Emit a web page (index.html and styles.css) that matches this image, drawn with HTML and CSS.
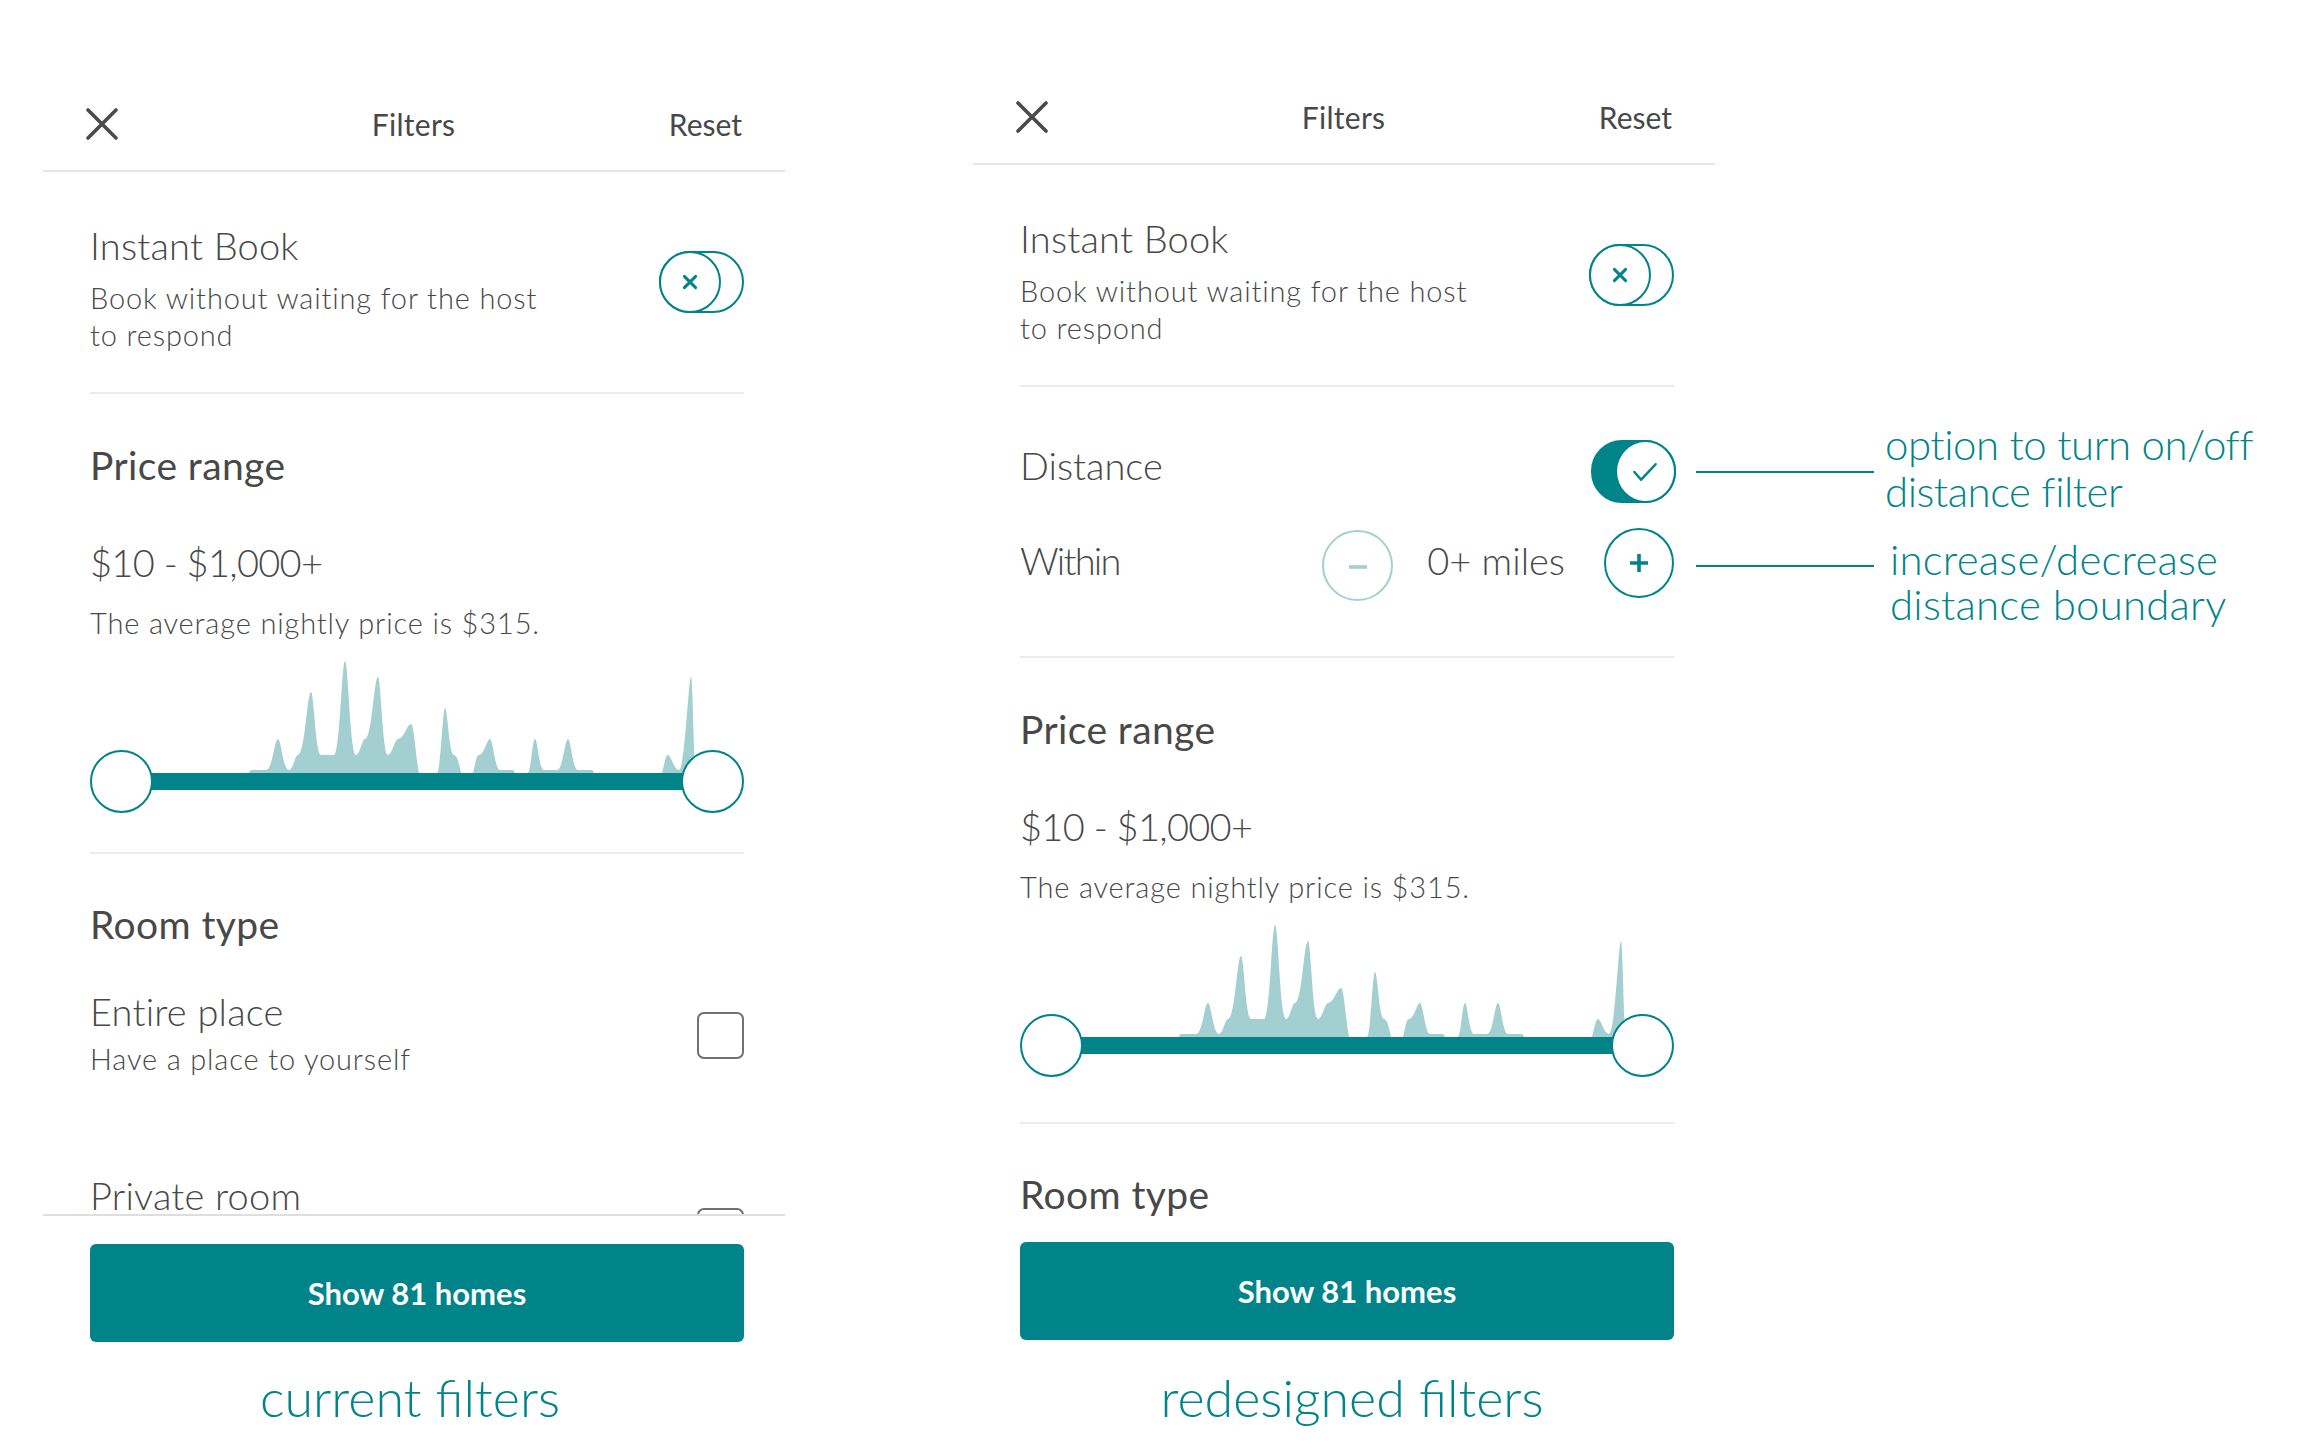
FILE: index.html
```html
<!DOCTYPE html>
<html lang="en">
<head>
<meta charset="utf-8">
<title>Filters – current vs redesigned</title>
<link rel="stylesheet" href="styles.css">
</head>
<body>
<div class="page">

  <!-- CURRENT FILTERS -->
  <section class="panel panel--current">
    <header class="panel-header">
      <svg class="close-icon" viewBox="0 0 34 34"><path d="M3 3 L31 31 M31 3 L3 31"/></svg>
      <div class="header-title">Filters</div>
      <div class="header-reset">Reset</div>
    </header>

    <div class="panel-body">
      <div class="section section--instant">
        <div class="option-row">
          <div class="option-text">
            <div class="option-title">Instant Book</div>
            <div class="option-sub">Book without waiting for the host to respond</div>
          </div>
          <div class="toggle toggle--off">
            <span class="toggle-knob"><svg class="knob-icon" viewBox="0 0 16 16"><path d="M3 3 L13 13 M13 3 L3 13"/></svg></span>
          </div>
        </div>
      </div>

      <div class="section section--price">
        <div class="section-heading">Price range</div>
        <div class="price-value">$10 - $1,000+</div>
        <div class="price-note">The average nightly price is $315.</div>
        <div class="slider">
          <svg class="histogram" viewBox="0 0 654 115" preserveAspectRatio="none"><path d="M159 115 C160 112 160 112 163 112 L176 112 C182.6 112 184.4 81 188 81 C191.3 81 193 112 199 112 C203 112 205 97 208 97 C215.2 97 217.1 34 221 34 C224 34 225.5 97 231 97 L244 97 C250 97 251.7 3 255 3 C258.3 3 260 97 266 97 C270 97 272 81 275 81 C282 81 284 19 288 19 C291 19 292.5 97 298 97 C302 97 305 81 308 81 C314 81 317 66 321 66 C324 66 326 100 329 115 L347 115 C350.5 115 352.6 50 355 50 C357.7 50 359 97 364 97 C367 97 369 105 371 115 L383 115 C385 108 386 97 389 97 C394 97 397 81 400 81 C403 81 405 112 410 112 L422 112 C424 112 424 113 425 115 L438 115 C441 112 442.5 81 445 81 C447.7 81 449 112 454 112 L467 112 C473 112 474.7 81 478 81 C481 81 482.5 112 488 112 L501 112 C503 112 503 113 504 115 L572 115 C574 108 575.5 97 578 97 C581 97 584 112 589 112 C595 112 598.5 19 601 19 C602.5 19 603.5 80 605 115 Z"/></svg>
          <div class="slider-track"></div>
          <span class="slider-knob slider-knob--min"></span>
          <span class="slider-knob slider-knob--max"></span>
        </div>
      </div>

      <div class="section section--room">
        <div class="section-heading">Room type</div>
        <div class="room-option room-option--entire">
          <div class="option-text">
            <div class="option-title">Entire place</div>
            <div class="option-sub option-sub--tight">Have a place to yourself</div>
          </div>
          <span class="checkbox checkbox--entire"></span>
        </div>
        <div class="room-option room-option--private">
          <div class="option-text">
            <div class="option-title">Private room</div>
          </div>
          <span class="checkbox checkbox--private"></span>
        </div>
      </div>
    </div>

    <div class="panel-footer">
      <button class="show-btn" type="button">Show 81 homes</button>
      <div class="caption caption--current">current filters</div>
    </div>
  </section>

  <!-- REDESIGNED FILTERS -->
  <section class="panel panel--redesign">
    <header class="panel-header">
      <svg class="close-icon" viewBox="0 0 34 34"><path d="M3 3 L31 31 M31 3 L3 31"/></svg>
      <div class="header-title">Filters</div>
      <div class="header-reset">Reset</div>
    </header>

    <div class="panel-body">
      <div class="section section--instant">
        <div class="option-row">
          <div class="option-text">
            <div class="option-title">Instant Book</div>
            <div class="option-sub">Book without waiting for the host to respond</div>
          </div>
          <div class="toggle toggle--off">
            <span class="toggle-knob"><svg class="knob-icon" viewBox="0 0 16 16"><path d="M3 3 L13 13 M13 3 L3 13"/></svg></span>
          </div>
        </div>
      </div>

      <div class="section section--distance">
        <div class="distance-row">
          <div class="distance-label">Distance</div>
          <div class="toggle toggle--on">
            <span class="toggle-knob"><svg class="check-icon" viewBox="0 0 59 59"><path d="M18 30 L25 38 L40 22"/></svg></span>
          </div>
          <div class="callout callout--toggle">
            <span class="callout-line"></span>
            <div class="callout-text">option to turn on/off<br>distance filter</div>
          </div>
        </div>
        <div class="within-row">
          <div class="within-label">Within</div>
          <span class="step-btn step-btn--minus"><svg viewBox="0 0 20 20"><path d="M1 10 H19"/></svg></span>
          <div class="miles">0+ miles</div>
          <span class="step-btn step-btn--plus"><svg viewBox="0 0 20 20"><path d="M1 10 H19 M10 1 V19"/></svg></span>
          <div class="callout callout--stepper">
            <span class="callout-line"></span>
            <div class="callout-text">increase/decrease<br>distance boundary</div>
          </div>
        </div>
      </div>

      <div class="section section--price">
        <div class="section-heading">Price range</div>
        <div class="price-value">$10 - $1,000+</div>
        <div class="price-note">The average nightly price is $315.</div>
        <div class="slider">
          <svg class="histogram" viewBox="0 0 654 115" preserveAspectRatio="none"><path d="M159 115 C160 112 160 112 163 112 L176 112 C182.6 112 184.4 81 188 81 C191.3 81 193 112 199 112 C203 112 205 97 208 97 C215.2 97 217.1 34 221 34 C224 34 225.5 97 231 97 L244 97 C250 97 251.7 3 255 3 C258.3 3 260 97 266 97 C270 97 272 81 275 81 C282 81 284 19 288 19 C291 19 292.5 97 298 97 C302 97 305 81 308 81 C314 81 317 66 321 66 C324 66 326 100 329 115 L347 115 C350.5 115 352.6 50 355 50 C357.7 50 359 97 364 97 C367 97 369 105 371 115 L383 115 C385 108 386 97 389 97 C394 97 397 81 400 81 C403 81 405 112 410 112 L422 112 C424 112 424 113 425 115 L438 115 C441 112 442.5 81 445 81 C447.7 81 449 112 454 112 L467 112 C473 112 474.7 81 478 81 C481 81 482.5 112 488 112 L501 112 C503 112 503 113 504 115 L572 115 C574 108 575.5 97 578 97 C581 97 584 112 589 112 C595 112 598.5 19 601 19 C602.5 19 603.5 80 605 115 Z"/></svg>
          <div class="slider-track"></div>
          <span class="slider-knob slider-knob--min"></span>
          <span class="slider-knob slider-knob--max"></span>
        </div>
      </div>

      <div class="section section--room">
        <div class="section-heading">Room type</div>
      </div>
    </div>

    <div class="panel-footer">
      <button class="show-btn" type="button">Show 81 homes</button>
      <div class="caption caption--redesign">redesigned filters</div>
    </div>
  </section>

</div>
</body>
</html>
```

FILE: styles.css
```css
:root {
  --teal: #008489;
  --teal-light: #a3cfd0;
  --text: #484848;
  --rule: #ebebeb;
}

* { box-sizing: border-box; }

body {
  margin: 0;
  background: #ffffff;
  color: var(--text);
  font-family: Lato, "Open Sans", "Liberation Sans", sans-serif;
}

.page {
  display: flex;
  align-items: flex-start;
  width: 2304px;
  height: 1453px;
  overflow: hidden;
}

/* ---------- panel ---------- */
.panel {
  width: 742px;
  flex: none;
  display: flex;
  flex-direction: column;
}
.panel--current { margin: 80px 0 0 43px; }
.panel--redesign { margin: 73px 0 0 188px; }

.panel-header {
  height: 92px;
  border-bottom: 2px solid #e6e6e6;
  display: grid;
  grid-template-columns: 1fr auto 1fr;
  align-items: center;
  padding: 0 43px 2px 42px;
  font-size: 30px;
  font-weight: 400;
  line-height: 36px;
}
.close-icon {
  width: 34px;
  height: 34px;
  display: block;
  fill: none;
  stroke: #4a4a4a;
  stroke-width: 3.6;
  stroke-linecap: round;
}
.header-title { text-align: center; letter-spacing: 0.3px; }
.header-reset { justify-self: end; }

.panel-body {
  padding: 0 41px 0 47px;
}
.panel--current .panel-body {
  height: 1044px;
  overflow: hidden;
  border-bottom: 2px solid #dedede;
}
.panel--redesign .panel-body {
  height: 1055px;
}

.section { border-bottom: 2px solid var(--rule); }
.section--room { border-bottom: none; }

/* ---------- shared text ---------- */
.option-title,
.distance-label,
.within-label,
.miles,
.price-value {
  font-size: 38px;
  line-height: 46px;
  font-weight: 300;
  white-space: nowrap;
}
.option-title { letter-spacing: 0.2px; }
.option-sub,
.price-note {
  font-size: 29px;
  line-height: 37px;
  font-weight: 300;
  letter-spacing: 0.85px;
}
.section-heading {
  font-size: 39px;
  line-height: 46px;
  font-weight: 400;
  letter-spacing: 0.4px;
}

/* ---------- instant book ---------- */
.section--instant { padding: 50px 0 39px; }
.option-row {
  display: flex;
  align-items: flex-start;
}
.option-text { flex: 1; min-width: 0; }
.option-sub { margin-top: 11px; max-width: 468px; }
.option-sub--tight { margin-top: 6px; max-width: none; white-space: nowrap; }

/* ---------- toggles ---------- */
.toggle {
  position: relative;
  flex: none;
  width: 85px;
  height: 62px;
  border: 2px solid var(--teal);
  border-radius: 31px;
}
.section--instant .toggle { margin-top: 29px; }
.toggle-knob {
  position: absolute;
  top: -2px;
  width: 62px;
  height: 62px;
  border: 2px solid var(--teal);
  border-radius: 50%;
  background: #fff;
  display: flex;
  align-items: center;
  justify-content: center;
}
.toggle--off .toggle-knob { left: -2px; }
.toggle--on {
  height: 63px;
  background: var(--teal);
}
.toggle--on .toggle-knob {
  right: -2px;
  width: 61px;
  height: 63px;
}
.knob-icon {
  width: 18px;
  height: 18px;
  fill: none;
  stroke: var(--teal);
  stroke-width: 2.6;
  stroke-linecap: round;
}
.check-icon {
  width: 59px;
  height: 59px;
  fill: none;
  stroke: var(--teal);
  stroke-width: 2.6;
  stroke-linecap: round;
  stroke-linejoin: round;
}

/* ---------- distance (redesign) ---------- */
.section--distance { padding: 53px 0 55px; }
.distance-row {
  position: relative;
  display: flex;
  align-items: flex-start;
  height: 63px;
}
.distance-label { flex: 1; margin-top: 2px; }
.distance-row .toggle { margin-right: -2px; }

.within-row {
  position: relative;
  display: flex;
  align-items: flex-start;
  height: 71px;
  margin-top: 27px;
}
.within-label { flex: 1; margin-top: 7px; letter-spacing: -1.8px; }
.miles { margin: 7px 39px 0 34px; }
.step-btn {
  flex: none;
  width: 71px;
  height: 71px;
  border: 2px solid var(--teal);
  border-radius: 50%;
  display: flex;
  align-items: center;
  justify-content: center;
}
.step-btn svg {
  width: 20px;
  height: 20px;
  fill: none;
  stroke-width: 3.6;
}
.step-btn--minus { border-color: var(--teal-light); }
.step-btn--minus svg { stroke: var(--teal-light); margin-top: 3px; }
.step-btn--plus { margin-top: -2px; width: 70px; height: 70px; }
.step-btn--plus svg { stroke: var(--teal); }

/* ---------- callouts ---------- */
.callout {
  position: absolute;
  left: calc(100% + 22px);
  display: flex;
  align-items: flex-start;
  color: var(--teal);
  font-size: 42px;
  font-weight: 300;
  white-space: nowrap;
}
.callout-line {
  flex: none;
  width: 178px;
  height: 2px;
  background: var(--teal);
}
.callout--toggle { top: -19px; line-height: 47px; }
.callout--toggle .callout-line { margin-top: 50px; }
.callout--toggle .callout-text { margin-left: 11px; letter-spacing: -0.5px; }
.callout--stepper { top: 7px; line-height: 45px; }
.callout--stepper .callout-line { margin-top: 28px; }
.callout--stepper .callout-text { margin-left: 16px; letter-spacing: 0.2px; }

/* ---------- price ---------- */
.section--price { padding: 48px 0 62px; }
.panel--redesign .section--price { padding-bottom: 68px; }
.price-value { margin-top: 51px; letter-spacing: -0.7px; }
.price-note { margin-top: 19px; }

.slider {
  position: relative;
  margin-top: 17px;
}
.histogram {
  display: block;
  width: 654px;
  height: 115px;
  fill: var(--teal-light);
}
.slider-track {
  height: 17px;
  margin: 0 31px;
  background: var(--teal);
}
.slider-knob {
  position: absolute;
  top: 92px;
  width: 63px;
  height: 63px;
  border: 2px solid var(--teal);
  border-radius: 50%;
  background: #fff;
}
.slider-knob--min { left: 0; }
.slider-knob--max { right: 0; }

/* ---------- room type ---------- */
.section--room { padding-top: 47px; }
.room-option {
  display: flex;
  align-items: flex-start;
}
.room-option--entire { margin-top: 41px; }
.room-option--private { margin-top: 95px; }
.checkbox {
  flex: none;
  width: 47px;
  height: 47px;
  margin-left: auto;
  border: 2px solid #717171;
  border-radius: 7px;
}
.checkbox--entire { margin-top: 24px; }
.checkbox--private { margin-top: 36px; }

/* ---------- footer ---------- */
.panel-footer {
  padding: 0 41px 0 47px;
}
.show-btn {
  display: block;
  width: 100%;
  height: 98px;
  margin-top: 28px;
  border: none;
  border-radius: 6px;
  background: var(--teal);
  color: #ffffff;
  font-family: inherit;
  font-size: 31px;
  font-weight: 700;
}
.panel--redesign .show-btn { margin-top: 22px; }
.caption {
  margin-top: 25px;
  text-align: center;
  color: var(--teal);
  font-size: 52px;
  line-height: 60px;
  font-weight: 300;
}
.caption--current { padding-right: 14px; }
.caption--redesign { margin-top: 27px; padding-left: 10px; }
```
